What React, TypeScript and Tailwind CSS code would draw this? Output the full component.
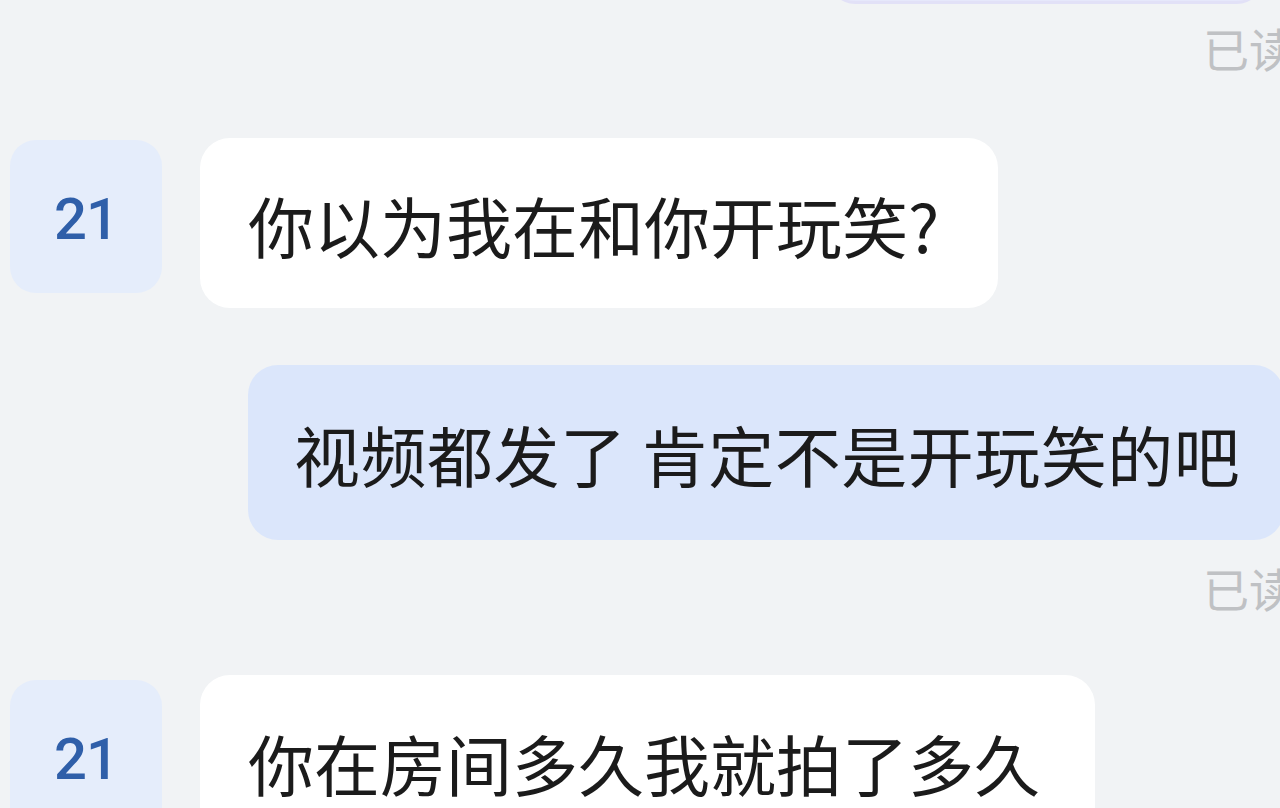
import React from "react";

const cjk = { fontFamily: '"Noto Sans CJK SC", "Noto Sans", sans-serif' };

function Avatar({ mt }: { mt: string }) {
  return (
    <div
      className={`flex h-[153px] w-[152px] shrink-0 items-center justify-center rounded-[26px] bg-[#e5edfb] ${mt}`}
    >
      <span
        className="mt-[4px] text-[58px] font-medium leading-none tracking-[-1px] text-[#2f5fa9]"
        style={{ fontFamily: 'Roboto, "Liberation Sans", sans-serif' }}
      >
        21
      </span>
    </div>
  );
}

function ReadMark({ mt }: { mt: string }) {
  return (
    <div className={`flex ${mt}`}>
      <span
        className="ml-[1203px] whitespace-nowrap text-[46px] leading-none text-[#bfc1c4]"
        style={cjk}
      >
        已读
      </span>
    </div>
  );
}

export default function App() {
  return (
    <div className="relative h-[808px] w-[1280px] overflow-hidden bg-[#f1f3f5]">
      <div className="flex flex-col">
        {/* previous outgoing bubble, cut off at top */}
        <div className="flex">
          <div className="ml-[829px] mt-[-40px] h-[44px] w-[434px] rounded-b-[26px] border-b-[3px] border-[#e2e1f7] bg-[#e6e8fb]" />
        </div>

        <ReadMark mt="mt-[20px]" />

        {/* incoming 1 */}
        <div className="mt-[68px] flex items-start gap-[38px] pl-[10px]">
          <Avatar mt="mt-[2px]" />
          <div
            className="flex h-[170px] items-center rounded-[30px] bg-white pl-[48px] pr-[59px] text-[66px] leading-none text-[#1b1b1b]"
            style={cjk}
          >
            <span className="mt-[2px] whitespace-nowrap">你以为我在和你开玩笑?</span>
          </div>
        </div>

        {/* outgoing */}
        <div className="mt-[57px] flex">
          <div
            className="ml-[248px] flex h-[175px] w-[1036px] shrink-0 items-center rounded-[30px] bg-[#dbe6fb] pl-[46px] text-[66px] leading-none text-[#1b1b1b]"
            style={cjk}
          >
            <span className="whitespace-nowrap tracking-[0.5px]">视频都发了 肯定不是开玩笑的吧</span>
          </div>
        </div>

        <ReadMark mt="mt-[24px]" />

        {/* incoming 2 */}
        <div className="mt-[65px] flex items-start gap-[38px] pl-[10px]">
          <Avatar mt="mt-[5px]" />
          <div
            className="flex h-[170px] w-[895px] items-center rounded-[30px] bg-white pl-[48px] text-[66px] leading-none text-[#1b1b1b]"
            style={cjk}
          >
            <span className="mt-[4px] whitespace-nowrap">你在房间多久我就拍了多久</span>
          </div>
        </div>
      </div>
    </div>
  );
}
